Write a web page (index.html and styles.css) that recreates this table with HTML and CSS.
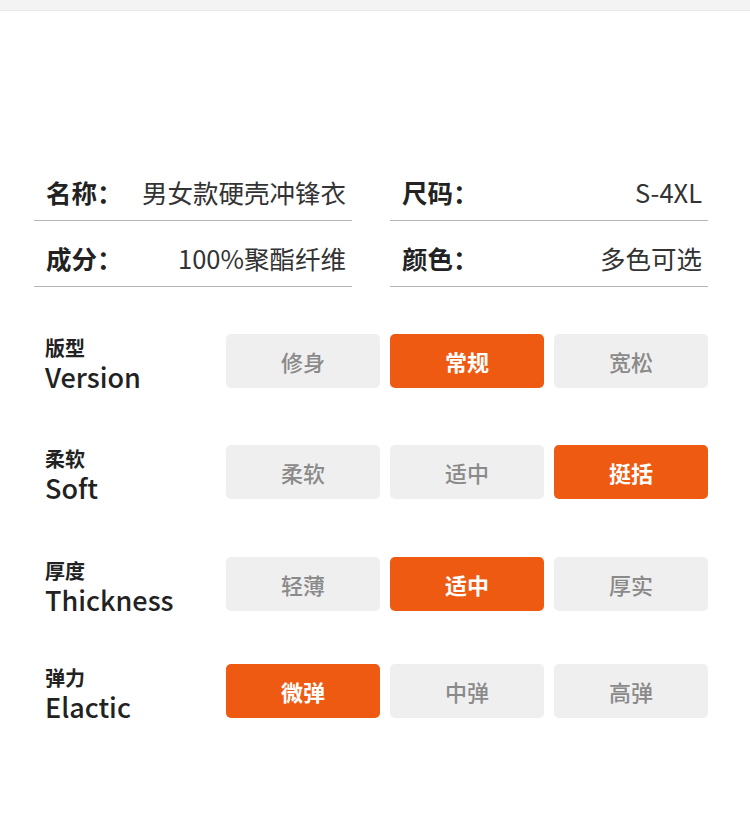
FILE: index.html
```
<!DOCTYPE html>
<html lang="zh">
<head>
<meta charset="utf-8">
<link rel="stylesheet" href="styles.css">
</head>
<body>
<div class="topbar"></div>
<section class="info">
  <div class="cell"><span class="k">名称：</span><span class="v">男女款硬壳冲锋衣</span></div>
  <div class="cell"><span class="k">尺码：</span><span class="v">S-4XL</span></div>
  <div class="cell"><span class="k">成分：</span><span class="v">100%聚酯纤维</span></div>
  <div class="cell"><span class="k">颜色：</span><span class="v">多色可选</span></div>
</section>
<section class="opts">
  <div class="row">
    <div class="lbl"><div class="zh">版型</div><div class="en">Version</div></div>
    <div class="btns"><div class="btn">修身</div><div class="btn on">常规</div><div class="btn">宽松</div></div>
  </div>
  <div class="row r2">
    <div class="lbl"><div class="zh">柔软</div><div class="en">Soft</div></div>
    <div class="btns"><div class="btn">柔软</div><div class="btn">适中</div><div class="btn on">挺括</div></div>
  </div>
  <div class="row r3">
    <div class="lbl"><div class="zh">厚度</div><div class="en">Thickness</div></div>
    <div class="btns"><div class="btn">轻薄</div><div class="btn on">适中</div><div class="btn">厚实</div></div>
  </div>
  <div class="row r4">
    <div class="lbl"><div class="zh">弹力</div><div class="en">Elactic</div></div>
    <div class="btns"><div class="btn on">微弹</div><div class="btn">中弹</div><div class="btn">高弹</div></div>
  </div>
</section>
</body>
</html>
```
FILE: styles.css
```
* { box-sizing: border-box; }
html, body { margin: 0; padding: 0; background: #fff; }
body {
  width: 750px;
  height: 833px;
  overflow: hidden;
  font-family: "Noto Sans CJK SC", "Noto Sans", sans-serif;
  color: #222;
}
.topbar {
  height: 11px;
  background: #f3f3f3;
  border-bottom: 1px solid #e9e9e9;
}
.info {
  margin: 144px 0 0 34px;
  width: 674px;
  display: grid;
  grid-template-columns: 318px 318px;
  column-gap: 38px;
}
.cell {
  display: flex;
  justify-content: space-between;
  align-items: center;
  height: 66px;
  padding: 20px 6px 12px 12px;
  border-bottom: 1px solid #b4b4b4;
  font-size: 25.5px;
  line-height: 34px;
}
.k { font-weight: 700; color: #222; }
.v { color: #333; }
.opts {
  margin: 47px 0 0 45px;
  width: 663px;
  display: flex;
  flex-direction: column;
}
.row {
  display: flex;
  align-items: flex-start;
  height: 54px;
}
.r2 { margin-top: 57px; }
.r3 { margin-top: 58px; }
.r4 { margin-top: 53px; }
.lbl {
  width: 181px;
  padding-top: 2px;
  display: flex;
  flex-direction: column;
}
.zh {
  font-size: 20px;
  font-weight: 700;
  line-height: 24px;
  color: #222;
}
.en {
  font-size: 27px;
  line-height: 34px;
  color: #222;
  font-weight: 500;
}
.btns {
  display: flex;
  gap: 10px;
}
.btn {
  width: 154px;
  height: 54px;
  border-radius: 5px;
  background: #efefef;
  color: #8a8a8a;
  font-size: 22px;
  font-weight: 500;
  display: flex;
  align-items: center;
  justify-content: center;
}
.btn.on {
  background: #ef5a12;
  color: #fff;
  font-weight: 700;
}
```
